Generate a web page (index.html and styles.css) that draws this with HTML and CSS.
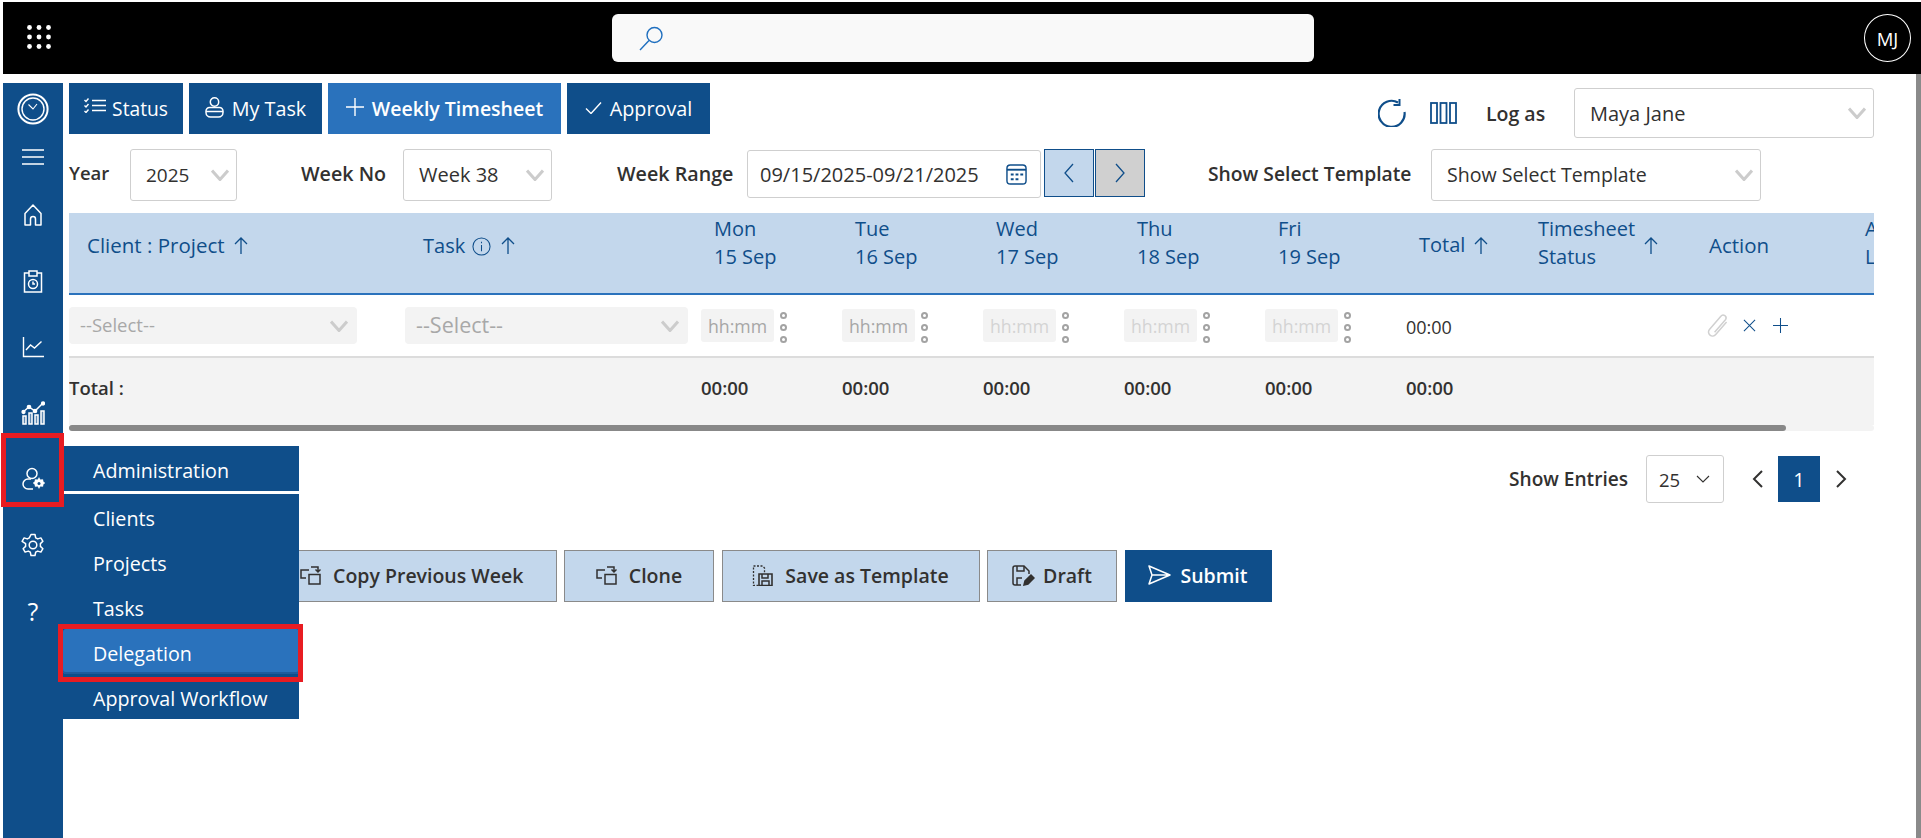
FILE: index.html
```html
<!DOCTYPE html>
<html lang="en">
<head>
<meta charset="utf-8">
<title>Weekly Timesheet</title>
<link rel="stylesheet" href="styles.css">
</head>
<body>
<header class="topbar">
  <svg class="apps" viewBox="0 0 24 24" fill="currentColor"><circle cx="2.5" cy="2.5" r="2.4"/><circle cx="12" cy="2.5" r="2.4"/><circle cx="21.5" cy="2.5" r="2.4"/><circle cx="2.5" cy="12" r="2.4"/><circle cx="12" cy="12" r="2.4"/><circle cx="21.5" cy="12" r="2.4"/><circle cx="2.5" cy="21.5" r="2.4"/><circle cx="12" cy="21.5" r="2.4"/><circle cx="21.5" cy="21.5" r="2.4"/></svg>
  <div class="search">
    <svg class="search-icon" viewBox="0 0 24 24" fill="none" stroke="currentColor" stroke-width="1.4"><ellipse cx="15.5" cy="8.5" rx="7.5" ry="7.5"/><path d="M10 14 1 23.5"/></svg>
  </div>
  <div class="avatar">MJ</div>
</header>
<div class="content">
  <nav class="sidebar">
    <div class="side-item side-logo"><svg class="ic-logo" viewBox="0 0 32 32" fill="none" stroke="currentColor"><circle cx="16" cy="16" r="14.6" stroke-width="2"/><circle cx="16" cy="16" r="11" stroke-width="1.4"/><path d="M11.5 11.5 16 16l4-5" stroke-width="1.1"/></svg></div>
    <div class="side-item side-menu"><svg class="ic-menu" viewBox="0 0 22 16" fill="none" stroke="currentColor" stroke-width="1.5"><path d="M0 1h22M0 8h22M0 15h22"/></svg></div>
    <div class="side-item side-home"><svg class="ic" viewBox="0 0 24 24" fill="none" stroke="currentColor" stroke-width="1.5" stroke-linejoin="round"><path d="M4 10.5 12 2l8 8.5V22h-5.5v-6a2.5 2.500 0 0 0-5 0v6H4z"/></svg></div>
    <div class="side-item"><svg class="ic" viewBox="0 0 24 24" fill="none" stroke="currentColor" stroke-width="1.5"><path d="M8 2h8v5H8z"/><path d="M8 4H3.500v19h17V4H16"/><circle cx="12" cy="15" r="4.500"/><path d="M12 12.500V15h2"/></svg></div>
    <div class="side-item"><svg class="ic" viewBox="0 0 24 24" fill="none" stroke="currentColor" stroke-width="1.4"><path d="M2.500 2v19.500H23"/><path d="m5 15 4.500-5 4 3 7-6.500"/></svg></div>
    <div class="side-item"><svg class="ic" viewBox="0 0 24 24" fill="none" stroke="currentColor" stroke-width="1.500"><path d="M2 23v-8h3v8zM8 23V12h3v11zM14 23v-9h3v9zM20 23V10h3v13z" fill="currentColor" fill-opacity=".35"/><path d="m2 11 6-5 6 4 8-8"/><circle cx="8" cy="6" r="1.600" fill="currentColor"/><circle cx="14" cy="10" r="1.600" fill="currentColor"/><circle cx="2.500" cy="11" r="1.400" fill="currentColor"/><circle cx="22" cy="2.500" r="1.400" fill="currentColor"/></svg></div>
    <div class="side-item side-admin">
      <svg class="ic" viewBox="0 0 24 24" fill="none" stroke="currentColor" stroke-width="1.500"><circle cx="11" cy="6.500" r="5"/><path d="M12 22H7a5 5 0 0 1 0-10h3"/><path d="m18 10.500 1.300 2.200 2.500-.3.500 2.400 1.700 1.200-1.700 1.200-.5 2.400-2.500-.3-1.300 2.200-1.300-2.200-2.500.3-.5-2.400-1.700-1.200 1.700-1.200.5-2.400 2.500.3z" fill="currentColor" stroke-width=".4"/><circle cx="18" cy="16.500" r="1.500" fill="#0f4e8a" stroke="none"/></svg>
      <div class="red-nav"></div>
      <div class="flyout">
        <div class="fly-title">Administration</div>
        <ul class="fly-list">
          <li class="fly-item">Clients</li>
          <li class="fly-item">Projects</li>
          <li class="fly-item">Tasks</li>
          <li class="fly-item fly-active">Delegation</li>
          <li class="fly-item">Approval Workflow</li>
        </ul>
      </div>
    </div>
    <div class="side-item"><svg class="ic" viewBox="0 0 24 24" fill="none" stroke="currentColor" stroke-width="1.500" stroke-linejoin="round"><path d="M10 1.500h4l.7 3.300 2 1.100 3.200-1 2 3.400-2.500 2.300v2.800l2.500 2.300-2 3.400-3.200-1-2 1.100-.7 3.300h-4l-.7-3.300-2-1.100-3.200 1-2-3.400 2.500-2.300v-2.800L1.100 8.300l2-3.400 3.200 1 2-1.100z"/><circle cx="12" cy="12" r="3.800"/></svg></div>
    <div class="side-item side-help">?</div>
  </nav>

  <main class="main">
    <div class="toolbar">
      <div class="tabs">
        <div class="tab tab-status"><svg class="tab-ic" viewBox="0 0 22 15" fill="none" stroke="currentColor" stroke-width="1.400"><path d="m.5 2 1.500 1.500L4.500.5M.5 7.500 2 9l2.500-3M.5 13 2 14.500 4.500 11.500M8 2.500h14M8 7.500h14M8 12.500h14"/></svg>Status</div>
        <div class="tab tab-task"><svg class="tab-ic tab-ic-user" viewBox="0 0 19 21" fill="none" stroke="currentColor" stroke-width="1.500"><circle cx="9.500" cy="5" r="4.200"/><path d="M1 14a3.500 3.500 0 0 1 3.500-3.500h10A3.500 3.500 0 0 1 18 14v1.500a4.500 4.500 0 0 1-4.500 4.500h-8A4.500 4.500 0 0 1 1 15.500z"/><path d="M1 14.500h17"/></svg>My Task</div>
        <div class="tab tab-active"><svg class="tab-ic tab-ic-plus" viewBox="0 0 18 18" fill="none" stroke="currentColor" stroke-width="1.400"><path d="M9 0v18M0 9h18"/></svg>Weekly Timesheet</div>
        <div class="tab tab-approval"><svg class="tab-ic tab-ic-check" viewBox="0 0 17 12" fill="none" stroke="currentColor" stroke-width="1.400"><path d="m1 6.500 5 5L16 .5"/></svg>Approval</div>
      </div>
      <div class="tools">
        <svg class="refresh" viewBox="0 0 28 28" fill="none" stroke="currentColor" stroke-width="2.200"><path d="M20 3.500A13 13 0 1 0 26.500 13"/><path d="M21.500 0v6h-6" stroke-width="2"/></svg>
        <svg class="cols" viewBox="0 0 27 22" fill="none" stroke="currentColor" stroke-width="1.800"><rect x="1" y="1" width="6" height="20"/><rect x="10.500" y="1" width="6" height="20"/><rect x="20" y="1" width="6" height="20"/></svg>
        <span class="logas">Log as</span>
        <div class="select select-logas">Maya Jane<svg class="chev" viewBox="0 0 18 12" fill="none" stroke="currentColor" stroke-width="3"><path d="m1 1.500 8 9 8-9"/></svg></div>
      </div>
    </div>

    <div class="filters">
      <span class="label label-year">Year</span>
      <div class="select select-year">2025<svg class="chev" viewBox="0 0 18 12" fill="none" stroke="currentColor" stroke-width="3"><path d="m1 1.500 8 9 8-9"/></svg></div>
      <span class="label label-week">Week No</span>
      <div class="select select-week">Week 38<svg class="chev" viewBox="0 0 18 12" fill="none" stroke="currentColor" stroke-width="3"><path d="m1 1.500 8 9 8-9"/></svg></div>
      <span class="label label-range">Week Range</span>
      <div class="date">09/15/2025-09/21/2025<svg class="cal" viewBox="0 0 22 22" fill="none" stroke="currentColor" stroke-width="1.500"><rect x="1" y="1" width="20" height="20" rx="3.500"/><path d="M1 6h20" stroke-width="2"/><path d="M5 11h3M10 11h3M15 11h3M5 16h3M10 16h3" stroke-width="2"/></svg></div>
      <div class="nav-btn nav-prev"><svg class="nav-chev" viewBox="0 0 10 20" fill="none" stroke="currentColor" stroke-width="1.300"><path d="M9 1 1 10l8 9"/></svg></div>
      <div class="nav-btn nav-next"><svg class="nav-chev" viewBox="0 0 10 20" fill="none" stroke="currentColor" stroke-width="1.300"><path d="m1 1 8 9-8 9"/></svg></div>
      <span class="label label-template">Show Select Template</span>
      <div class="select select-template">Show Select Template<svg class="chev" viewBox="0 0 18 12" fill="none" stroke="currentColor" stroke-width="3"><path d="m1 1.500 8 9 8-9"/></svg></div>
    </div>

    <section class="sheet">
      <div class="row head">
        <div class="th th-client">Client : Project<svg class="arrow" viewBox="0 0 14 17" fill="none" stroke="currentColor" stroke-width="1.300"><path d="M7 17V1M1 7l6-6 6 6"/></svg></div>
        <div class="th th-task">Task<svg class="info" viewBox="0 0 20 20" fill="none" stroke="currentColor" stroke-width="1.100"><circle cx="10" cy="10" r="9"/><path d="M10 8.500V15M10 5v1.500"/></svg><svg class="arrow arrow-task" viewBox="0 0 14 17" fill="none" stroke="currentColor" stroke-width="1.300"><path d="M7 17V1M1 7l6-6 6 6"/></svg></div>
        <div class="th th-day">Mon<br>15 Sep</div>
        <div class="th th-day">Tue<br>16 Sep</div>
        <div class="th th-day">Wed<br>17 Sep</div>
        <div class="th th-day">Thu<br>18 Sep</div>
        <div class="th th-day">Fri<br>19 Sep</div>
        <div class="th th-total">Total<svg class="arrow" viewBox="0 0 14 17" fill="none" stroke="currentColor" stroke-width="1.300"><path d="M7 17V1M1 7l6-6 6 6"/></svg></div>
        <div class="th th-status"><span class="status-text">Timesheet<br>Status</span><svg class="arrow arrow-status" viewBox="0 0 14 17" fill="none" stroke="currentColor" stroke-width="1.300"><path d="M7 17V1M1 7l6-6 6 6"/></svg></div>
        <div class="th th-action">Action</div>
        <div class="th th-last">A<br>L</div>
      </div>
      <div class="row entry">
        <div class="cell"><div class="dis-select dis-client">--Select--<svg class="chev" viewBox="0 0 18 12" fill="none" stroke="currentColor" stroke-width="3"><path d="m1 1.500 8 9 8-9"/></svg></div></div>
        <div class="cell"><div class="dis-select dis-task">--Select--<svg class="chev" viewBox="0 0 18 12" fill="none" stroke="currentColor" stroke-width="3"><path d="m1 1.500 8 9 8-9"/></svg></div></div>
        <div class="cell cell-time"><div class="time">hh:mm</div><div class="dots"><i></i><i></i><i></i></div></div>
        <div class="cell cell-time"><div class="time">hh:mm</div><div class="dots"><i></i><i></i><i></i></div></div>
        <div class="cell cell-time"><div class="time time-off">hh:mm</div><div class="dots"><i></i><i></i><i></i></div></div>
        <div class="cell cell-time"><div class="time time-off">hh:mm</div><div class="dots"><i></i><i></i><i></i></div></div>
        <div class="cell cell-time"><div class="time time-off">hh:mm</div><div class="dots"><i></i><i></i><i></i></div></div>
        <div class="cell cell-sum">00:00</div>
        <div class="cell"></div>
        <div class="cell cell-action">
          <svg class="clip" viewBox="2 1 19 21" fill="none" stroke="currentColor" stroke-width="1.300"><path d="M19 8 9.500 19a3.500 3.500 0 0 1-5.500-4.500L14 3a2.400 2.400 0 0 1 4 3L8.500 17"/></svg>
          <svg class="act-x" viewBox="0 0 14 14" fill="none" stroke="currentColor" stroke-width="1.100"><path d="m1 1 12 12M13 1 1 13"/></svg>
          <svg class="act-plus" viewBox="0 0 16 16" fill="none" stroke="currentColor" stroke-width="1.100"><path d="M8 0v16M0 8h16"/></svg>
        </div>
        <div class="cell"></div>
      </div>
      <div class="row totals">
        <div class="cell">Total :</div>
        <div class="cell"></div>
        <div class="cell">00:00</div>
        <div class="cell">00:00</div>
        <div class="cell">00:00</div>
        <div class="cell">00:00</div>
        <div class="cell">00:00</div>
        <div class="cell">00:00</div>
      </div>
      <div class="hscroll"><div class="hthumb"></div></div>
    </section>

    <div class="pager">
      <span class="pager-label">Show Entries</span>
      <div class="entries">25<svg class="entries-chev" viewBox="0 0 14 8" fill="none" stroke="currentColor" stroke-width="1.100"><path d="m1 1 6 6 6-6"/></svg></div>
      <svg class="pg-chev" viewBox="0 0 11 18" fill="none" stroke="currentColor" stroke-width="2"><path d="M10 1 2 9l8 8"/></svg>
      <div class="pg-num">1</div>
      <svg class="pg-chev" viewBox="0 0 11 18" fill="none" stroke="currentColor" stroke-width="2"><path d="m1 1 8 8-8 8"/></svg>
    </div>

    <div class="actions">
      <div class="btn btn-copy"><svg class="btn-ic" viewBox="0 0 21 20" fill="none" stroke="currentColor" stroke-width="1.500"><path d="M9 5H1v8h5"/><path d="M9 9.500h11v9.500H9z"/><path d="M11 2h7v5M15.500 4.500l2.500 2.500 2.500-2.500"/></svg>Copy Previous Week</div>
      <div class="btn btn-clone"><svg class="btn-ic" viewBox="0 0 21 20" fill="none" stroke="currentColor" stroke-width="1.500"><path d="M9 5H1v8h5"/><path d="M9 9.500h11v9.500H9z"/><path d="M11 2h7v5M15.500 4.500l2.500 2.500 2.500-2.500"/></svg>Clone</div>
      <div class="btn btn-save"><svg class="btn-ic btn-ic-save" viewBox="0 0 20 21" fill="none" stroke="currentColor" stroke-width="1.300"><path d="M6 20.500H1V1h9l2 2v5" stroke-dasharray="2 1.500"/><path d="M6.500 9h13v11.500h-13z" stroke-width="1.600"/><path d="M9.500 9v4h6V9M9.500 20.500V16h7v4.500" stroke-width="1.500"/></svg>Save as Template</div>
      <div class="btn btn-draft"><svg class="btn-ic btn-ic-draft" viewBox="0 0 23 21" fill="none" stroke="currentColor" stroke-width="1.500"><path d="M9 20H3a2 2 0 0 1-2-2V3a2 2 0 0 1 2-2h9l5 5v3"/><path d="M5 1v5h7V1M5 20v-7h5"/><path d="m12 20 1-4 6-6 3 3-6 6z" fill="currentColor"/></svg>Draft</div>
      <div class="btn btn-submit"><svg class="btn-ic btn-ic-send" viewBox="0 0 23 20" fill="none" stroke="currentColor" stroke-width="1.500" stroke-linejoin="round"><path d="M1 1 22 10 1 19l3-9zM4 10h18"/></svg>Submit</div>
    </div>
  </main>
  <div class="vscroll"></div>
</div>
</body>
</html>
```
FILE: styles.css
```css
* { box-sizing: border-box; }
html, body { margin: 0; height: 100%; }
body {
  padding: 2px 0 0 3px;
  height: 838px;
  overflow: hidden;
  display: flex;
  flex-direction: column;
  background: #fff;
  color: #323130;
  font-family: "Open Sans", "Noto Sans", sans-serif;
  font-size: 20px;
}
svg { display: block; flex: none; }

/* top bar */
.topbar {
  height: 72px;
  flex: none;
  background: #000;
  display: flex;
  align-items: center;
  color: #fff;
  padding-left: 24px;
}
.apps { width: 24px; height: 24px; margin-top: -2px; }
.search {
  margin-left: 561px;
  width: 702px;
  height: 48px;
  background: #f9f9f9;
  border-radius: 6px;
  display: flex;
  align-items: center;
  padding-left: 27px;
  color: #1f6fbf;
}
.search-icon { width: 24px; height: 25px; }
.avatar {
  margin-left: auto;
  margin-right: 10px;
  width: 47px;
  height: 48px;
  border: 1px solid #fff;
  border-radius: 50%;
  display: flex;
  align-items: center;
  justify-content: center;
  font-size: 18.500px;
}

.content { flex: 1; display: flex; min-height: 0; }

/* sidebar */
.sidebar {
  width: 60px;
  flex: none;
  margin-top: 9px;
  background: #0f4e8a;
  color: #fff;
  position: relative;
  z-index: 2;
}
.side-item {
  height: 66px;
  display: flex;
  align-items: center;
  justify-content: center;
  position: relative;
}
.side-logo { height: 52px; }
.side-menu { height: 44px; }
.side-home { margin-top: 3px; }
.ic-logo { width: 32px; height: 32px; }
.ic-menu { width: 22px; height: 16px; }
.ic { width: 24px; height: 24px; }
.side-help { font-size: 25px; }
.red-nav {
  position: absolute;
  left: -2px;
  top: -13px;
  width: 63px;
  height: 74px;
  border: 5px solid #e81c22;
  z-index: 3;
}
.flyout {
  position: absolute;
  left: 100%;
  top: 0;
  width: 236px;
  font-size: 19.700px;
}
.fly-title {
  height: 45px;
  background: #0f4e8a;
  padding: 3px 0 0 30px;
  display: flex;
  align-items: center;
}
.fly-list {
  list-style: none;
  margin: 3px 0 0;
  padding: 0;
  height: 225px;
  background: #0f4e8a;
}
.fly-item {
  height: 45px;
  padding: 3px 0 0 30px;
  display: flex;
  align-items: center;
}
.fly-active {
  background: #2a72bc;
  border-radius: 3px;
  position: relative;
  box-shadow: inset 0 -2px 0 #1f5c9d;
}
.fly-active::after {
  content: "";
  position: absolute;
  left: -5px;
  right: -4px;
  top: -5px;
  bottom: -8px;
  border: 5px solid #e81c22;
}
.fly-item:first-child { margin-top: 1px; }

/* main */
.main {
  flex: 1;
  min-width: 0;
  padding: 9px 42px 0 6px;
}
.vscroll { width: 5px; flex: none; background: #8a8a8a; }

.toolbar { display: flex; justify-content: space-between; height: 55px; }
.tabs { display: flex; gap: 6px; height: 51px; }
.tab {
  background: #0f4e8a;
  color: #fff;
  display: flex;
  align-items: center;
  justify-content: center;
  font-size: 19.800px;
}
.tab-status { width: 114px; font-size: 19.200px; }
.tab-task { width: 133px; }
.tab-active { width: 233px; background: #2a72bc; font-weight: 600; font-size: 19.500px; }
.tab-approval { width: 143px; }
.tab-ic { width: 22px; height: 15px; margin-right: 6px; margin-top: -6px; }
.tab-ic-user { width: 19px; height: 21px; margin-right: 8px; margin-top: -3px; }
.tab-ic-plus { width: 18px; height: 18px; margin-right: 8px; margin-top: -4px; }
.tab-ic-check { width: 17px; height: 12px; margin-right: 8px; margin-top: -2px; }
.tools { display: flex; align-items: flex-start; color: #0f4e8a; padding-top: 5px; }
.refresh { width: 28px; height: 28px; margin-top: 11px; }
.cols { width: 27px; height: 22px; margin: 14px 0 0 24px; }
.logas { color: #323130; font-weight: 600; font-size: 19.500px; margin: 12px 0 0 29px; width: 88px; }
.select {
  border: 1px solid #cfcfcf;
  border-radius: 3px;
  background: #fff;
  color: #323130;
  display: flex;
  align-items: center;
  padding: 0 0 1px 15px;
  position: relative;
  height: 52px;
}
.chev {
  position: absolute;
  right: 7px;
  top: 50%;
  width: 18px;
  height: 12px;
  margin-top: -6px;
  color: #cccccc;
}
.select-logas { width: 300px; height: 50px; padding-bottom: 0; }

.filters { display: flex; align-items: flex-start; height: 52px; margin-top: 11px; }
.label { font-weight: 600; padding-top: 11px; white-space: nowrap; font-size: 19.700px; }
.label-year { width: 61px; font-size: 18.500px; }
.select-year { width: 107px; font-size: 19px; }
.label-week { margin-left: 64px; width: 102px; }
.select-week { width: 149px; }
.label-range { margin-left: 65px; width: 130px; }
.date {
  width: 294px;
  height: 48px;
  margin-top: 1px;
  border: 1px solid #cfcfcf;
  border-radius: 3px;
  display: flex;
  align-items: center;
  justify-content: space-between;
  padding: 0 13px 0 12px;
  white-space: nowrap;
}
.cal { width: 21px; height: 21px; color: #0f4e8a; }
.nav-btn {
  width: 50px;
  height: 48px;
  border: 1px solid #0f4e8a;
  display: flex;
  align-items: center;
  justify-content: center;
  color: #0f4e8a;
}
.nav-prev { background: #c3d7ec; margin-left: 3px; }
.nav-next { background: #d0d0d0; margin-left: 1px; }
.nav-chev { width: 10px; height: 20px; }
.label-template { margin-left: 63px; width: 223px; font-size: 19.300px; }
.select-template { width: 330px; font-size: 19.600px; }

/* sheet */
.sheet { margin-top: 12px; width: 1805px; overflow: hidden; }
.row {
  display: grid;
  grid-template-columns: 336px 296px repeat(5, 141px) 132px 171px 156px 100px;
}
.head {
  height: 82px;
  background: #c3d7ec;
  border-bottom: 2px solid #2a72bc;
  color: #0f4e8a;
  font-size: 20px;
  line-height: 28px;
}
.th { padding-top: 2px; }
.th-client { padding: 18px 0 0 18px; display: flex; align-items: flex-start; font-size: 20.500px; }
.th-task { padding: 19px 0 0 18px; display: flex; align-items: flex-start; }
.th-day { padding-left: 13px; }
.th-total { padding: 18px 0 0 13px; display: flex; align-items: flex-start; }
.th-status { display: flex; }
.status-text { display: block; width: 106px; }
.th-action { padding-top: 18px; font-size: 20.500px; }
.th-last { white-space: nowrap; }
.arrow { width: 14px; height: 17px; margin: 6px 0 0 9px; }
.arrow-status { margin: 22px 0 0 0; }
.arrow-task { margin-left: 10px; margin-top: 5px; }
.info { width: 19px; height: 19px; margin: 5px 0 0 7px; }
.entry { height: 63px; border-bottom: 2px solid #dcdcdc; }
.dis-select {
  background: #f3f3f3;
  border-radius: 4px;
  color: #a8a8a8;
  display: flex;
  align-items: center;
  position: relative;
  height: 37px;
  margin-top: 12px;
  padding-bottom: 2px;
}
.dis-client { width: 288px; padding-left: 11px; font-size: 18.500px; }
.dis-task { width: 283px; padding-left: 11px; font-size: 21.500px; }
.dis-select .chev { right: 9px; }
.cell-time { display: flex; align-items: flex-start; padding-top: 14px; }
.time {
  width: 73px;
  height: 33px;
  background: #f3f3f3;
  border-radius: 3px;
  color: #a6a6a6;
  font-size: 17.700px;
  display: flex;
  align-items: center;
  justify-content: center;
}
.time-off { color: #d4d4d4; }
.dots { margin: 3px 0 0 6px; display: flex; flex-direction: column; gap: 5px; }
.dots i { width: 7px; height: 7px; border: 2px solid #a3a3a3; border-radius: 50%; display: block; }
.cell-sum { padding-top: 20px; font-size: 18px; }
.cell-action { display: flex; align-items: flex-start; padding: 19px 0 0 0; margin-left: -2px; color: #0f4e8a; }
.clip { width: 22px; height: 24px; color: #d0d0d0; }
.act-x { width: 13px; height: 13px; margin: 5px 0 0 14px; }
.act-plus { width: 15px; height: 15px; margin: 4px 0 0 17px; }
.totals { height: 67px; background: #f3f3f3; font-weight: 600; font-size: 18.500px; padding-top: 17px; }
.hscroll { height: 6px; background: #f3f3f3; border-radius: 3px; }
.hthumb { width: 1717px; height: 6px; background: #888; border-radius: 3px; }

/* pager */
.pager { display: flex; align-items: center; justify-content: flex-end; height: 48px; margin-top: 24px; padding-right: 27px; }
.pager-label { font-weight: 600; width: 137px; font-size: 19.100px; white-space: nowrap; }
.entries {
  width: 78px;
  height: 48px;
  border: 1px solid #cfcfcf;
  border-radius: 3px;
  display: flex;
  align-items: center;
  justify-content: space-between;
  padding: 0 13px 0 12px;
  font-size: 18.500px;
}
.entries-chev { width: 14px; height: 8px; }
.pg-chev { width: 11px; height: 18px; margin: 0 15px 0 28px; }
.pg-num {
  width: 42px;
  height: 46px;
  background: #0f4e8a;
  color: #fff;
  display: flex;
  align-items: center;
  justify-content: center;
}
.pg-num + .pg-chev { margin: 0 0 0 16px; }

/* bottom buttons */
.actions { display: flex; gap: 7.500px; margin-top: 47px; padding-left: 198px; }
.btn {
  height: 52px;
  background: #c3d7ec;
  border: 1.500px solid #8a8a8a;
  display: flex;
  align-items: center;
  justify-content: center;
  gap: 12px;
  font-weight: 600;
  font-size: 19.500px;
  padding-bottom: 2px;
  white-space: nowrap;
}
.btn-ic { width: 21px; height: 20px; }
.btn-ic-save { height: 21px; }
.btn-ic-draft { width: 23px; height: 21px; }
.btn-copy { width: 289.500px; }
.btn-clone { width: 150px; }
.btn-save { width: 258px; }
.btn-draft { width: 130px; gap: 8px; }
.btn-submit { width: 147px; background: #0f4e8a; border: none; color: #fff; gap: 9px; }
.btn-ic-send { width: 23px; }
```
